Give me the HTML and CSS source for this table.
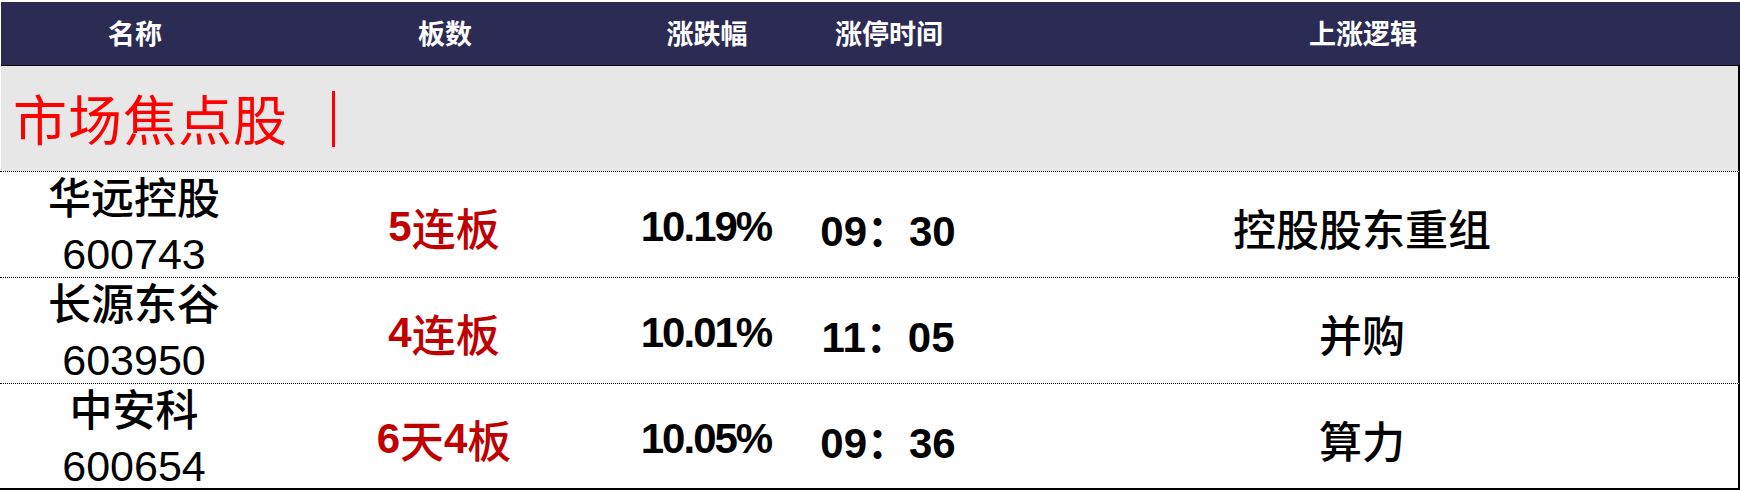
FILE: index.html
```html
<!DOCTYPE html>
<html lang="zh-CN">
<head>
<meta charset="utf-8">
<title>市场焦点股</title>
<link rel="stylesheet" href="styles.css">
</head>
<body>
<div class="board">
  <div class="head">
    <div class="hc">名称</div>
    <div class="hc">板数</div>
    <div class="hc">涨跌幅</div>
    <div class="hc">涨停时间</div>
    <div class="hc">上涨逻辑</div>
  </div>
  <div class="section">
    <span class="section-title">市场焦点股</span>
    <span class="section-bar"></span>
  </div>
  <div class="row">
    <div class="cell name"><span>华远控股</span><span class="code">600743</span></div>
    <div class="cell boards"><span class="num">5</span>连板</div>
    <div class="cell pct">10.19%</div>
    <div class="cell time">09：30</div>
    <div class="cell logic">控股股东重组</div>
  </div>
  <div class="row">
    <div class="cell name"><span>长源东谷</span><span class="code">603950</span></div>
    <div class="cell boards"><span class="num">4</span>连板</div>
    <div class="cell pct">10.01%</div>
    <div class="cell time">11：05</div>
    <div class="cell logic">并购</div>
  </div>
  <div class="row last">
    <div class="cell name"><span>中安科</span><span class="code">600654</span></div>
    <div class="cell boards"><span class="num">6</span>天<span class="num">4</span>板</div>
    <div class="cell pct">10.05%</div>
    <div class="cell time">09：36</div>
    <div class="cell logic">算力</div>
  </div>
</div>
</body>
</html>
```

FILE: styles.css
```css
html, body {
  margin: 0;
  padding: 0;
  background: #ffffff;
}

body {
  font-family: "Liberation Sans", "Noto Sans CJK SC", sans-serif;
  color: #000;
}

.board {
  width: 1740px;
  padding-top: 2px;
}

.head,
.row {
  display: grid;
  grid-template-columns: 268px 352px 172px 192px 756px;
}

.head {
  height: 63px;
  background: #2c2b53;
  border-bottom: 1px solid #000;
  margin-left: 1px;
}

.hc {
  display: flex;
  align-items: center;
  justify-content: center;
  color: #fff;
  font-family: "Noto Sans CJK SC", sans-serif;
  font-size: 27px;
  font-weight: 700;
  padding-bottom: 2px;
}

.section {
  height: 105px;
  background: #e7e7e7;
  border-right: 2px solid #000;
  margin-left: 1px;
  display: flex;
  align-items: center;
  padding-left: 12px;
  padding-bottom: 2px;
  box-sizing: border-box;
}

.section-title {
  color: #ff0000;
  font-family: "Noto Sans CJK SC", serif;
  font-size: 54px;
  font-weight: 400;
  letter-spacing: 1px;
  line-height: 1;
}

.section-bar {
  width: 3px;
  height: 56px;
  background: #ff0000;
  margin-left: 44px;
  margin-top: 2px;
}

.row {
  height: 106px;
  border-top: 1px dotted #000;
  border-right: 2px solid #000;
  box-sizing: border-box;
}

.row.last {
  border-bottom: 2px solid #000;
  height: 107px;
}

.cell {
  display: flex;
  align-items: center;
  justify-content: center;
  font-size: 43px;
}

.name {
  flex-direction: column;
  line-height: 55px;
  font-family: "Liberation Sans", "Noto Sans CJK SC", sans-serif;
  font-weight: 500;
}

.name .code {
  font-weight: 400;
}

.boards {
  color: #c00000;
  font-family: "Noto Sans CJK SC", sans-serif;
  font-weight: 500;
  font-size: 44px;
}

.boards .num {
  font-family: "Liberation Sans", sans-serif;
  font-weight: 700;
  font-size: 42px;
}

.pct {
  font-weight: 700;
  font-size: 42px;
  letter-spacing: -2px;
}

.time {
  font-weight: 700;
  font-size: 42px;
  letter-spacing: 0;
}

.logic {
  font-family: "Noto Sans CJK SC", sans-serif;
  font-weight: 500;
  font-size: 43px;
}
```
